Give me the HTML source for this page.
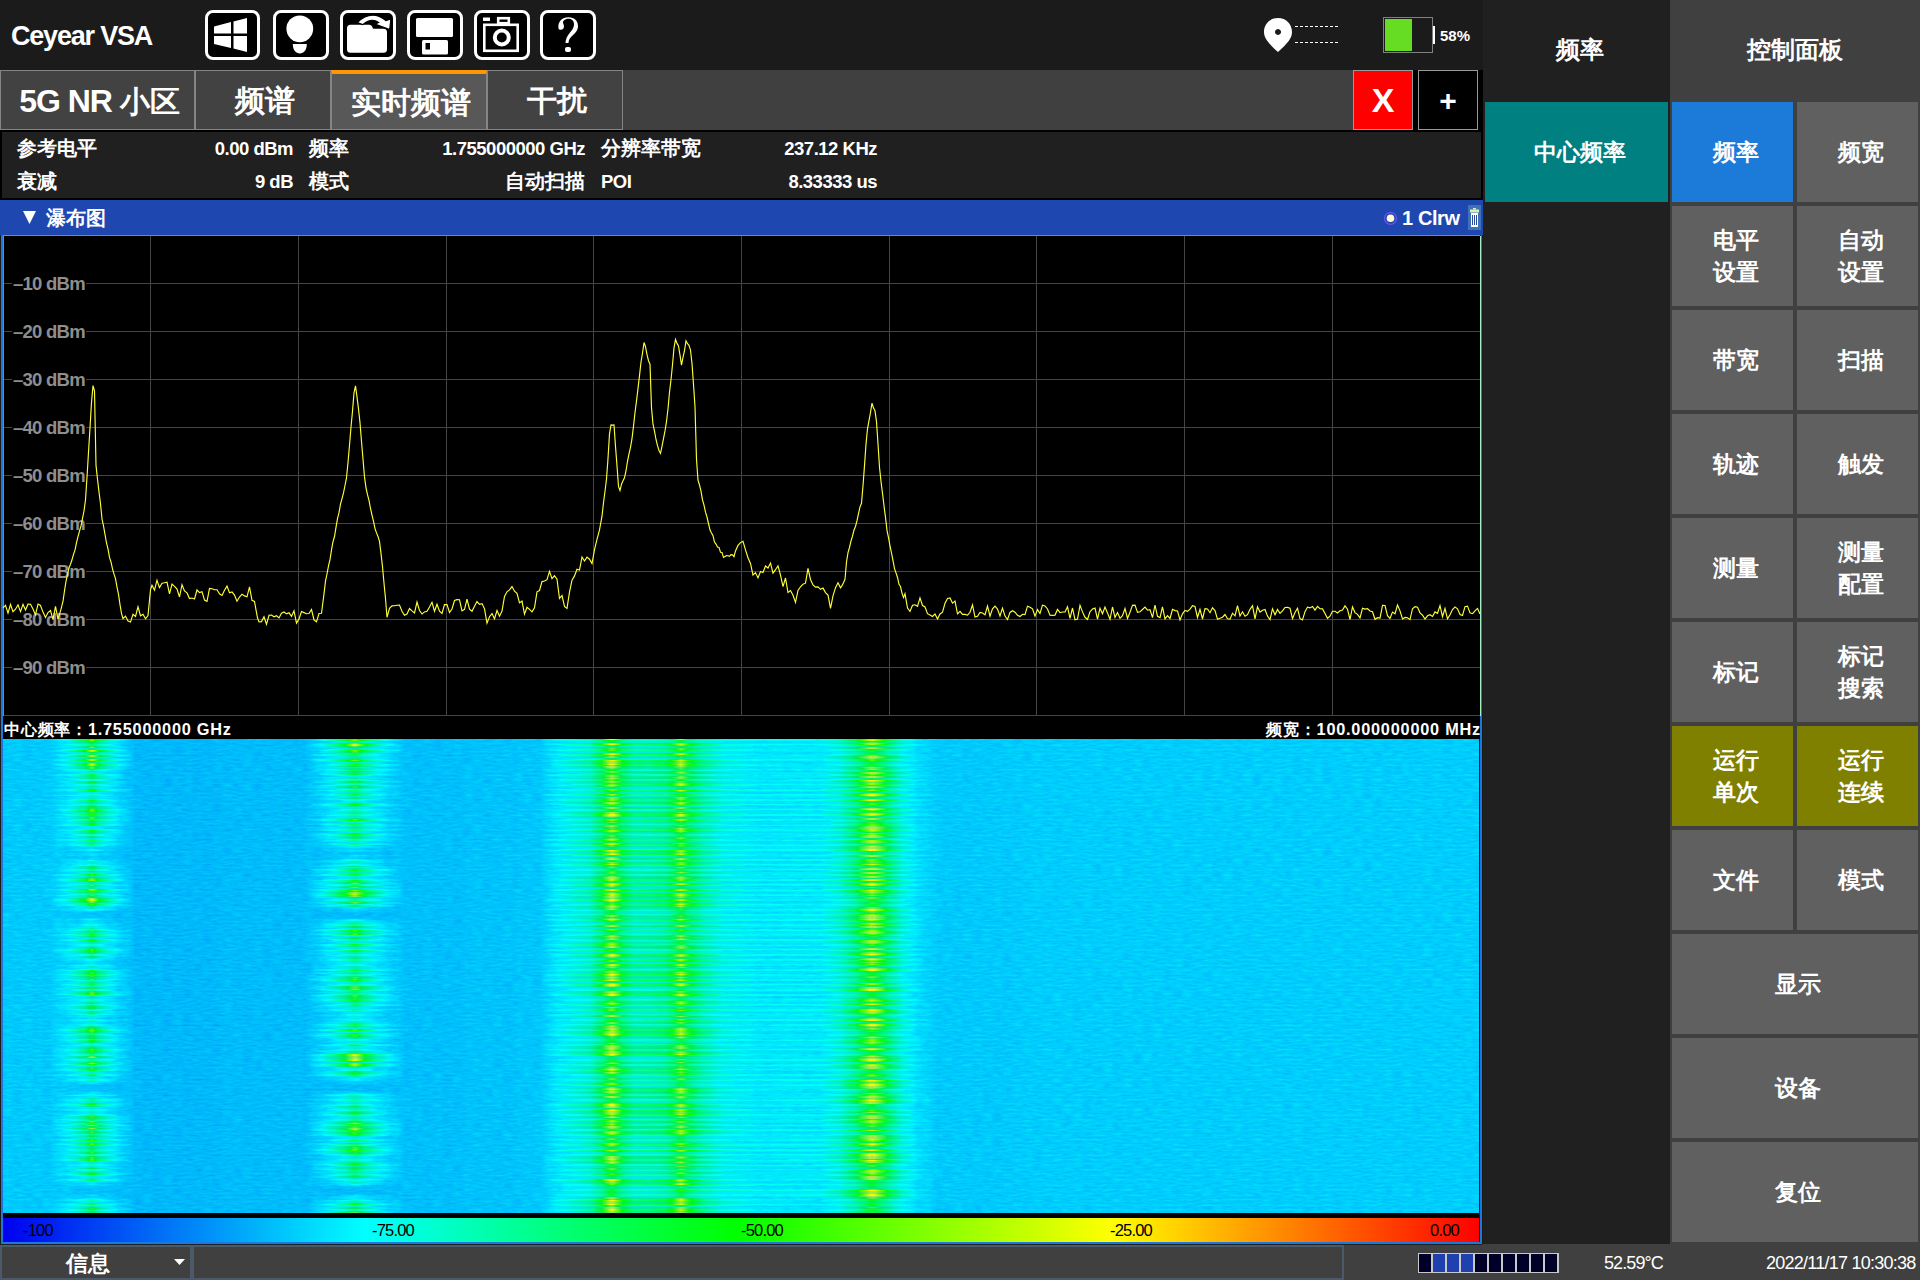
<!DOCTYPE html>
<html><head><meta charset="utf-8">
<style>
*{margin:0;padding:0;box-sizing:border-box}
html,body{width:1920px;height:1280px;overflow:hidden;background:#1b1b1b;font-family:"Liberation Sans",sans-serif;color:#fff;font-weight:bold}
.a{position:absolute}
.t{position:absolute;white-space:nowrap;line-height:1}
/* top bar */
#title{left:11px;top:23px;font-size:27px;letter-spacing:-1.2px}
.ic{position:absolute;top:10px;width:55px;height:50px;border:3px solid #fff;border-radius:8px;background:#000}
.ic svg{position:absolute;left:0;top:0}
/* tabs */
#tabbar{left:0;top:70px;width:1353px;height:60px;background:#404040}
.tab{position:absolute;top:70px;height:60px;background:#424242;border:1px solid #858585;font-size:30px;text-align:center;line-height:60px;padding-left:4px}
.lat{font-size:32px;letter-spacing:-1px}
.tab.act{background:#585858;border-top:4px solid #ff9800;line-height:58px}
#xbtn{left:1353px;top:70px;width:60px;height:60px;background:#f00;border:1px solid #999;font-size:34px;text-align:center;line-height:58px;font-weight:bold}
#pbtn{left:1418px;top:70px;width:60px;height:60px;background:#000;border:1px solid #999;font-size:30px;text-align:center;line-height:59px}
/* info */
#info{left:0;top:130px;width:1483px;height:70px;background:#202020;border:2px solid #000}
.inf{font-size:20px}
.vl{font-size:18.5px;letter-spacing:-0.5px;margin-top:-1.5px}
/* blue bar */
#bbar{left:0;top:200px;width:1483px;height:35px;background:#1f47b0}
/* plot */
#plot{left:3px;top:235px;width:1477px;height:481px;background:#000}
.yl{position:absolute;left:12px;font-size:18.5px;color:#8e8e8e;line-height:20px;white-space:nowrap;background:#000;padding:0 1px;margin-top:3px;letter-spacing:-0.75px}
#lrow{left:3px;top:716px;width:1477px;height:23px;background:#000}
#wf{left:3px;top:739px;width:1476px;height:474px;background:#00c0f8}
#cbar{left:3px;top:1218px;width:1476px;height:24px;background:linear-gradient(90deg,#0000f0 0%,#00ffff 24.5%,#00ff00 49.7%,#ffff00 75.1%,#ff0000 100%)}
.cl{position:absolute;top:1221px;font-weight:normal;color:#000;font-size:16.5px;line-height:18px;letter-spacing:-0.8px;white-space:nowrap}
/* status bar */
#sbar{left:0;top:1244px;width:1920px;height:36px;background:#404040}
/* right */
#rcol{left:1483px;top:0;width:187px;height:1244px;background:#202020}
#cpan{left:1670px;top:0;width:250px;height:1244px;background:#404040}
.btn{position:absolute;background:#606060;font-size:23px;padding-left:6px;text-align:center;display:flex;align-items:center;justify-content:center;line-height:32px}
</style></head>
<body>
<!-- top bar -->
<div class="t" id="title">Ceyear VSA</div>
<div class="ic" style="left:205px;width:55px">
 <svg width="49" height="44" viewBox="0 0 49 44"><path d="M6,13.5 L23,9 V20.5 H6 Z M25.5,8.5 L39,5 V20.5 H25.5 Z M6,23 H23 V35 L6,31 Z M25.5,23 H39 V39 L25.5,35.5 Z" fill="#fff"/></svg>
</div>
<div class="ic" style="left:273px;width:56px">
 <svg width="50" height="44" viewBox="0 0 50 44"><circle cx="23.8" cy="15.8" r="13.4" fill="#fff"/><path d="M14.5,22 H33 L30,28 H17.5 Z" fill="#fff"/><path d="M16.8,31 H30.8 C30.8,37 27.8,40.5 23.8,40.5 C19.8,40.5 16.8,37 16.8,31 Z" fill="#fff"/></svg>
</div>
<div class="ic" style="left:340px;width:56px">
 <svg width="50" height="44" viewBox="0 0 50 44"><path d="M7.5,11.8 H26 Q29,11.8 30,15.7 H40.5 Q44,15.7 44,19.2 V36.2 Q44,39.7 40.5,39.7 H7.5 Q4,39.7 4,36.2 V15.3 Q4,11.8 7.5,11.8 Z" fill="#fff"/><path d="M14.3,9.5 Q28.4,-4 42.9,7.5 L47.9,5.9 L46.7,16.6 L32,11.1 L35.6,9.5 Q28.4,4.5 19.7,11.6 Z" fill="#fff" stroke="#000" stroke-width="1.2"/></svg>
</div>
<div class="ic" style="left:407px;width:56px">
 <svg width="50" height="44" viewBox="0 0 50 44"><rect x="6" y="5" width="37" height="19" rx="1.5" fill="#fff"/><rect x="12" y="27" width="26" height="14.5" rx="1.5" fill="#fff"/><rect x="15.5" y="30" width="4.5" height="6.5" fill="#000"/></svg>
</div>
<div class="ic" style="left:474px;width:56px">
 <svg width="50" height="44" viewBox="0 0 50 44"><rect x="6" y="4.5" width="7" height="3.5" fill="#fff"/><rect x="21.2" y="5.2" width="10.6" height="5" fill="none" stroke="#fff" stroke-width="2.6"/><rect x="7.3" y="11.8" width="33.4" height="26" fill="none" stroke="#fff" stroke-width="2.6"/><circle cx="24.8" cy="24.5" r="7" fill="none" stroke="#fff" stroke-width="4"/></svg>
</div>
<div class="ic" style="left:540px;width:56px">
 <svg width="50" height="44" viewBox="0 0 50 44"><path d="M15.5,15.5 C14.5,8.5 19,4.2 25.5,4.2 C31.5,4.2 35,8 35,13 C35,18 31.5,20.5 28.5,23.5 C26.5,25.5 25.5,27.5 25.5,30 L22.5,30 C22.5,26.5 24,23 27,19.5 C29.5,16.5 31,14.5 31,11.5 C31,7.5 28.5,5.8 25.5,5.8 C22.5,5.8 20,7.5 20,9.5 C20,10.5 21,11.5 21,13.5 C21,15.5 19.5,16.8 18,16.8 C16.5,16.8 15.6,16.2 15.5,15.5 Z" fill="#fff"/><rect x="22" y="34" width="6" height="5" rx="2" fill="#fff"/></svg>
</div>
<!-- location + battery -->
<svg class="a" style="left:1260px;top:14px" width="90" height="44" viewBox="0 0 90 44">
 <path d="M18,4 C26,4 32,10 32,18 C32,24 28,29 18,38 C8,29 4,24 4,18 C4,10 10,4 18,4 Z M18,15 A3,3 0 1 0 18.01,15 Z" fill="#fff" fill-rule="evenodd"/>
 <line x1="35" y1="12.5" x2="80" y2="12.5" stroke="#fff" stroke-width="1" stroke-dasharray="3,2"/>
 <line x1="35" y1="28.5" x2="80" y2="28.5" stroke="#fff" stroke-width="1" stroke-dasharray="3,2"/>
</svg>
<div class="a" style="left:1383px;top:17px;width:50px;height:36px;border:1px solid #808080"></div>
<div class="a" style="left:1385px;top:19px;width:27px;height:32px;background:#66dd22"></div>
<div class="a" style="left:1433px;top:26px;width:2px;height:18px;background:#fff"></div>
<div class="t" style="left:1440px;top:28px;font-size:15px">58%</div>

<!-- tabs -->
<div class="a" id="tabbar"></div>
<div class="a" style="left:1413px;top:70px;width:70px;height:60px;background:#000"></div>
<div class="tab" style="left:0;width:195px"><span class="lat">5G NR </span>小区</div>
<div class="tab" style="left:195px;width:136px">频谱</div>
<div class="tab act" style="left:331px;width:156px">实时频谱</div>
<div class="tab" style="left:487px;width:136px">干扰</div>
<div class="a" id="xbtn">X</div>
<div class="a" id="pbtn">+</div>

<!-- info -->
<div class="a" id="info"></div>
<div class="t inf" style="left:17px;top:138px">参考电平</div>
<div class="t inf" style="left:17px;top:171px">衰减</div>
<div class="t vl" style="right:1627px;top:141px">0.00 dBm</div>
<div class="t vl" style="right:1627px;top:174px">9 dB</div>
<div class="t inf" style="left:309px;top:138px">频率</div>
<div class="t inf" style="left:309px;top:171px">模式</div>
<div class="t vl" style="right:1335px;top:141px">1.755000000 GHz</div>
<div class="t inf" style="right:1335px;top:171px">自动扫描</div>
<div class="t inf" style="left:601px;top:138px">分辨率带宽</div>
<div class="t vl" style="left:601px;top:174px">POI</div>
<div class="t vl" style="right:1043px;top:141px">237.12 KHz</div>
<div class="t vl" style="right:1043px;top:174px">8.33333 us</div>

<!-- blue bar -->
<div class="a" id="bbar"></div>
<svg class="a" style="left:23px;top:211px" width="14" height="14"><path d="M0,0 H13 L6.5,13 Z" fill="#fff"/></svg>
<div class="t" style="left:46px;top:208px;font-size:20px">瀑布图</div>
<svg class="a" style="left:1383px;top:211px" width="15" height="15"><circle cx="7.5" cy="7.3" r="6" fill="none" stroke="#7050f0" stroke-width="1.2"/><circle cx="7.5" cy="7.3" r="3.8" fill="#fffad0"/></svg>
<div class="t" style="left:1402px;top:208px;font-size:20px;letter-spacing:-0.4px">1 Clrw</div>
<div class="a" style="left:1468px;top:205px;width:13px;height:25px;background:#4070b8"></div>
<svg class="a" style="left:1468px;top:205px" width="13" height="25"><rect x="5" y="3" width="3" height="1.5" fill="#d8f0b8"/><rect x="2" y="4.5" width="9" height="3" fill="#d8f0b8"/><rect x="3" y="8" width="7" height="14" fill="#fff"/><rect x="4" y="10" width="1" height="10" fill="#2a4a9a"/><rect x="6" y="10" width="1" height="10" fill="#2a4a9a"/><rect x="8" y="10" width="1" height="10" fill="#2a4a9a"/></svg>

<!-- left blue border of main panel -->
<div class="a" style="left:1px;top:235px;width:2px;height:1009px;background:#1e78dc"></div>
<div class="a" style="left:1480px;top:716px;width:2px;height:528px;background:#1e78dc"></div>
<div class="a" style="left:1481px;top:235px;width:1px;height:481px;background:#1e78dc"></div>
<div class="a" style="left:1480px;top:236px;width:1px;height:480px;background:#a0f0c8"></div>
<div class="a" style="left:1px;top:1242px;width:1481px;height:2px;background:#1e78dc"></div>

<!-- plot -->
<div class="a" id="plot"></div>
<svg class="a" style="left:0;top:0" width="1483" height="740" viewBox="0 0 1483 740">
<g stroke="#444" stroke-width="1">
<line x1="150.5" y1="236" x2="150.5" y2="716" />
<line x1="298.5" y1="236" x2="298.5" y2="716" />
<line x1="446.5" y1="236" x2="446.5" y2="716" />
<line x1="593.5" y1="236" x2="593.5" y2="716" />
<line x1="741.5" y1="236" x2="741.5" y2="716" />
<line x1="889.5" y1="236" x2="889.5" y2="716" />
<line x1="1036.5" y1="236" x2="1036.5" y2="716" />
<line x1="1184.5" y1="236" x2="1184.5" y2="716" />
<line x1="1332.5" y1="236" x2="1332.5" y2="716" />
<line x1="4" y1="283.5" x2="1480" y2="283.5" />
<line x1="4" y1="331.5" x2="1480" y2="331.5" />
<line x1="4" y1="379.5" x2="1480" y2="379.5" />
<line x1="4" y1="427.5" x2="1480" y2="427.5" />
<line x1="4" y1="475.5" x2="1480" y2="475.5" />
<line x1="4" y1="523.5" x2="1480" y2="523.5" />
<line x1="4" y1="571.5" x2="1480" y2="571.5" />
<line x1="4" y1="619.5" x2="1480" y2="619.5" />
<line x1="4" y1="667.5" x2="1480" y2="667.5" />
<line x1="4" y1="715.5" x2="1480" y2="715.5" />
<line x1="3" y1="235.5" x2="1480" y2="235.5" stroke="#858585"/>
<line x1="3.5" y1="235" x2="3.5" y2="716" stroke="#858585"/>
</g>
</svg>
<div class="yl" style="top:271px">&#8211;10 dBm</div><div class="yl" style="top:319px">&#8211;20 dBm</div><div class="yl" style="top:367px">&#8211;30 dBm</div><div class="yl" style="top:415px">&#8211;40 dBm</div><div class="yl" style="top:463px">&#8211;50 dBm</div><div class="yl" style="top:511px">&#8211;60 dBm</div><div class="yl" style="top:559px">&#8211;70 dBm</div><div class="yl" style="top:607px">&#8211;80 dBm</div><div class="yl" style="top:655px">&#8211;90 dBm</div>
<svg class="a" style="left:0;top:0" width="1483" height="740" viewBox="0 0 1483 740">
<path d="M3.0,607.9 L5.5,605.4 L8.0,613.1 L10.5,604.5 L13.0,611.6 L15.5,609.2 L18.0,604.8 L20.5,611.6 L23.0,604.3 L25.5,610.0 L28.0,604.2 L30.5,604.3 L33.0,609.1 L35.5,614.9 L38.0,604.1 L40.5,605.5 L43.0,612.1 L45.5,617.5 L48.0,612.6 L50.5,610.5 L53.0,619.7 L55.5,606.4 L58.0,619.2 L60.5,611.2 L63.0,601.3 L64.5,590.9 L66.0,581.3 L67.5,574.4 L69.0,567.8 L70.5,564.3 L72.0,559.8 L73.5,554.3 L75.0,550.1 L76.5,542.7 L78.0,536.7 L79.5,531.1 L81.0,525.9 L82.5,518.3 L84.0,511.0 L85.5,499.9 L87.0,477.3 L88.5,452.2 L90.0,427.9 L91.5,402.4 L93.0,385.6 L94.5,390.8 L96.0,465.1 L97.5,479.3 L99.0,491.9 L100.5,503.8 L102.0,519.0 L103.5,525.9 L105.0,534.4 L106.5,543.0 L108.0,548.8 L109.5,557.4 L111.0,562.0 L112.5,568.8 L114.0,574.1 L115.5,578.6 L117.0,587.1 L118.5,594.4 L120.0,604.6 L121.5,613.3 L123.0,618.6 L125.5,616.1 L128.0,621.1 L130.5,622.1 L133.0,614.3 L135.5,616.5 L138.0,606.8 L140.5,615.8 L143.0,614.3 L145.5,618.8 L148.0,615.6 L150.5,589.9 L152.0,585.3 L154.5,590.2 L157.0,580.2 L159.5,587.6 L162.0,583.3 L164.5,582.8 L167.0,582.2 L169.5,593.9 L172.0,584.1 L174.5,586.3 L177.0,589.0 L179.5,597.0 L182.0,584.7 L184.5,591.0 L187.0,592.9 L189.5,598.6 L192.0,598.0 L194.5,599.0 L197.0,590.0 L199.5,592.6 L202.0,591.7 L204.5,600.1 L207.0,601.3 L209.5,588.4 L212.0,588.8 L214.5,589.7 L217.0,589.7 L219.5,593.8 L222.0,595.4 L224.5,590.2 L227.0,586.1 L229.5,592.7 L232.0,591.9 L234.5,595.1 L237.0,601.2 L239.5,597.0 L242.0,594.2 L244.5,595.9 L247.0,596.8 L249.5,586.9 L252.0,600.4 L254.5,601.5 L256.0,609.9 L257.5,617.8 L259.0,621.9 L261.5,621.6 L264.0,616.8 L266.5,624.3 L269.0,615.3 L271.5,615.0 L274.0,616.8 L276.5,615.7 L279.0,617.9 L281.5,613.2 L284.0,612.0 L286.5,613.9 L289.0,612.8 L291.5,616.3 L294.0,610.8 L296.5,623.2 L299.0,618.9 L301.5,611.5 L304.0,612.6 L306.5,613.7 L309.0,613.5 L311.5,609.5 L314.0,620.0 L316.5,621.8 L319.0,613.5 L321.5,613.3 L324.0,593.8 L325.5,581.2 L327.0,574.0 L328.5,565.9 L330.0,559.7 L331.5,549.9 L333.0,541.6 L334.5,536.5 L336.0,527.3 L337.5,518.6 L339.0,512.7 L340.5,504.1 L342.0,498.6 L343.5,492.9 L345.0,485.5 L346.5,477.9 L348.0,462.5 L349.5,445.2 L351.0,427.0 L352.5,411.2 L354.0,392.8 L355.5,385.9 L357.0,396.9 L358.5,408.9 L360.0,422.9 L361.5,441.5 L363.0,459.1 L364.5,476.9 L366.0,487.8 L367.5,494.7 L369.0,500.4 L370.5,508.5 L372.0,515.2 L373.5,521.4 L375.0,528.6 L376.5,532.9 L378.0,536.5 L379.5,541.4 L381.0,553.4 L382.5,566.8 L384.0,583.3 L385.5,598.5 L387.0,617.3 L389.5,608.3 L392.0,605.9 L394.5,605.8 L397.0,605.2 L399.5,605.1 L402.0,611.2 L404.5,615.2 L407.0,614.1 L409.5,608.5 L412.0,610.9 L414.5,612.9 L417.0,602.0 L419.5,610.5 L422.0,614.0 L424.5,611.9 L427.0,611.2 L429.5,607.0 L432.0,602.3 L434.5,611.3 L437.0,604.2 L439.5,611.1 L442.0,613.4 L444.5,604.6 L447.0,604.5 L449.5,612.5 L452.0,609.0 L454.5,600.5 L457.0,599.6 L459.5,599.8 L462.0,610.9 L464.5,609.3 L467.0,599.2 L469.5,609.2 L472.0,611.3 L474.5,606.3 L477.0,601.5 L479.5,604.3 L482.0,603.6 L484.5,608.8 L487.0,623.2 L489.5,616.7 L492.0,613.6 L494.5,618.8 L497.0,610.5 L499.5,616.2 L502.0,611.1 L504.5,596.5 L507.0,591.8 L509.5,589.9 L512.0,586.6 L514.5,591.2 L517.0,593.4 L519.5,602.9 L522.0,601.1 L524.5,614.2 L527.0,607.3 L529.5,609.4 L532.0,611.8 L534.5,607.8 L537.0,591.8 L539.5,590.5 L542.0,581.6 L544.5,581.0 L547.0,579.7 L549.5,571.4 L552.0,578.6 L554.5,575.6 L557.0,579.1 L559.5,598.5 L562.0,595.6 L564.5,606.4 L567.0,608.4 L569.5,592.1 L572.0,580.2 L574.5,575.9 L577.0,569.3 L579.5,570.0 L582.0,557.0 L584.5,561.0 L587.0,557.1 L589.5,559.2 L592.0,563.6 L594.5,549.6 L597.0,539.4 L599.5,529.9 L602.0,516.2 L603.5,502.8 L605.0,491.3 L606.5,479.0 L608.0,458.4 L609.5,433.9 L611.0,424.9 L612.5,425.1 L614.0,424.9 L615.5,446.4 L617.0,465.8 L618.5,486.4 L620.0,490.5 L621.5,484.2 L623.0,480.8 L624.5,477.7 L626.0,471.0 L627.5,461.4 L629.0,453.9 L630.5,447.3 L632.0,438.7 L633.5,426.1 L635.0,412.5 L636.5,401.1 L638.0,388.4 L639.5,375.6 L641.0,362.0 L642.5,353.1 L644.0,342.5 L645.5,346.7 L647.0,354.6 L648.5,360.7 L650.0,364.2 L651.5,407.6 L653.0,424.2 L654.5,431.2 L656.0,439.5 L657.5,445.7 L659.0,450.5 L660.5,453.4 L662.0,446.4 L663.5,438.6 L665.0,430.9 L666.5,421.7 L668.0,408.7 L669.5,392.3 L671.0,379.7 L672.5,364.7 L674.0,347.9 L675.5,339.5 L677.0,343.4 L678.5,346.0 L680.0,355.2 L681.5,365.1 L683.0,357.3 L684.5,350.6 L686.0,340.8 L687.5,343.7 L689.0,345.4 L690.5,350.0 L692.0,363.6 L693.5,384.5 L695.0,406.8 L696.5,459.2 L698.0,480.2 L699.5,485.0 L701.0,491.1 L702.5,499.8 L704.0,505.2 L705.5,512.2 L707.0,517.0 L708.5,523.5 L710.0,530.1 L711.5,533.0 L713.0,535.7 L714.5,542.1 L716.0,544.1 L717.5,547.1 L719.0,547.4 L720.5,552.2 L722.0,552.4 L723.5,557.3 L725.0,556.5 L726.5,555.7 L728.0,555.8 L729.5,556.4 L731.0,554.7 L732.5,554.9 L734.0,556.7 L735.5,550.9 L738.0,545.4 L740.5,542.6 L743.0,541.3 L745.5,549.8 L748.0,557.7 L750.5,563.5 L753.0,575.0 L755.5,572.6 L758.0,577.9 L760.5,571.5 L763.0,572.5 L765.5,566.0 L768.0,568.0 L770.5,563.1 L773.0,573.1 L775.5,569.7 L778.0,565.8 L780.5,575.1 L783.0,586.6 L785.5,578.0 L788.0,592.5 L790.5,590.6 L793.0,595.3 L795.5,602.4 L798.0,590.5 L800.5,586.8 L803.0,584.2 L805.5,583.2 L808.0,568.3 L810.5,579.5 L813.0,584.9 L815.5,587.1 L818.0,586.9 L820.5,589.3 L823.0,588.1 L825.5,592.6 L828.0,595.1 L830.5,608.4 L833.0,595.8 L835.5,587.7 L838.0,582.8 L840.5,587.8 L842.0,585.6 L843.5,582.8 L845.0,579.3 L846.5,562.0 L848.0,552.6 L849.5,547.5 L851.0,541.0 L852.5,536.2 L854.0,530.0 L855.5,526.5 L857.0,520.7 L858.5,513.6 L860.0,506.9 L861.5,503.3 L863.0,485.8 L864.5,465.6 L866.0,444.1 L867.5,428.8 L869.0,420.7 L870.5,412.4 L872.0,403.1 L873.5,408.1 L875.0,410.8 L876.5,421.8 L878.0,443.8 L879.5,467.2 L881.0,481.5 L882.5,493.2 L884.0,505.8 L885.5,517.4 L887.0,530.3 L888.5,537.6 L890.0,545.8 L891.5,553.0 L893.0,560.6 L894.5,568.6 L896.0,572.9 L897.5,577.5 L899.0,584.3 L900.5,586.5 L902.0,593.1 L903.5,597.6 L905.0,593.7 L907.5,608.0 L910.0,611.4 L912.5,605.3 L915.0,604.8 L917.5,606.3 L920.0,597.9 L922.5,605.5 L925.0,607.0 L927.5,613.7 L930.0,615.1 L932.5,616.5 L935.0,613.9 L937.5,619.0 L940.0,613.9 L942.5,612.2 L945.0,603.3 L947.5,598.4 L950.0,598.0 L952.5,603.2 L955.0,601.1 L957.5,613.8 L960.0,611.4 L962.5,614.4 L965.0,614.4 L967.5,615.2 L970.0,612.3 L972.5,605.0 L975.0,617.0 L977.5,616.2 L980.0,612.5 L982.5,613.0 L985.0,614.9 L987.5,606.0 L990.0,616.1 L992.5,608.8 L995.0,606.1 L997.5,609.0 L1000.0,615.9 L1002.5,608.1 L1005.0,616.1 L1007.5,619.6 L1010.0,612.4 L1012.5,610.7 L1015.0,612.2 L1017.5,615.3 L1020.0,616.5 L1022.5,614.3 L1025.0,614.6 L1027.5,606.2 L1030.0,607.2 L1032.5,608.8 L1035.0,616.1 L1037.5,609.6 L1040.0,613.5 L1042.5,605.2 L1045.0,605.9 L1047.5,609.0 L1050.0,615.1 L1052.5,615.4 L1055.0,615.1 L1057.5,609.4 L1060.0,612.7 L1062.5,612.0 L1065.0,612.0 L1067.5,606.8 L1070.0,618.4 L1072.5,608.0 L1075.0,619.7 L1077.5,619.0 L1080.0,605.3 L1082.5,611.9 L1085.0,617.3 L1087.5,619.5 L1090.0,611.7 L1092.5,609.0 L1095.0,608.1 L1097.5,619.2 L1100.0,608.2 L1102.5,613.7 L1105.0,607.1 L1107.5,612.9 L1110.0,619.3 L1112.5,607.0 L1115.0,617.3 L1117.5,612.6 L1120.0,618.3 L1122.5,615.6 L1125.0,608.5 L1127.5,618.5 L1130.0,612.3 L1132.5,605.4 L1135.0,605.1 L1137.5,612.4 L1140.0,611.8 L1142.5,609.5 L1145.0,607.1 L1147.5,610.2 L1150.0,609.7 L1152.5,617.6 L1155.0,605.0 L1157.5,616.3 L1160.0,617.6 L1162.5,606.8 L1165.0,618.9 L1167.5,615.7 L1170.0,618.5 L1172.5,609.3 L1175.0,610.6 L1177.5,610.9 L1180.0,620.0 L1182.5,613.8 L1185.0,610.4 L1187.5,611.4 L1190.0,609.1 L1192.5,605.7 L1195.0,606.5 L1197.5,617.5 L1200.0,609.3 L1202.5,619.0 L1205.0,608.7 L1207.5,609.0 L1210.0,612.7 L1212.5,607.8 L1215.0,610.6 L1217.5,619.3 L1220.0,618.3 L1222.5,617.2 L1225.0,614.5 L1227.5,618.7 L1230.0,619.1 L1232.5,613.2 L1235.0,615.8 L1237.5,605.7 L1240.0,616.0 L1242.5,611.8 L1245.0,616.3 L1247.5,614.7 L1250.0,609.3 L1252.5,605.7 L1255.0,618.9 L1257.5,606.9 L1260.0,612.1 L1262.5,610.2 L1265.0,609.5 L1267.5,616.1 L1270.0,619.6 L1272.5,608.9 L1275.0,614.8 L1277.5,609.5 L1280.0,613.4 L1282.5,610.9 L1285.0,607.5 L1287.5,607.4 L1290.0,608.1 L1292.5,618.6 L1295.0,612.5 L1297.5,608.3 L1300.0,618.6 L1302.5,619.9 L1305.0,611.7 L1307.5,607.1 L1310.0,607.9 L1312.5,606.4 L1315.0,610.1 L1317.5,606.4 L1320.0,608.6 L1322.5,608.9 L1325.0,613.5 L1327.5,618.3 L1330.0,616.2 L1332.5,611.2 L1335.0,611.2 L1337.5,612.9 L1340.0,610.7 L1342.5,610.1 L1345.0,605.9 L1347.5,609.2 L1350.0,619.5 L1352.5,606.9 L1355.0,612.6 L1357.5,614.4 L1360.0,617.9 L1362.5,608.2 L1365.0,609.1 L1367.5,608.7 L1370.0,611.0 L1372.5,611.7 L1375.0,619.3 L1377.5,617.7 L1380.0,618.1 L1382.5,605.3 L1385.0,605.5 L1387.5,615.6 L1390.0,618.4 L1392.5,612.1 L1395.0,613.8 L1397.5,605.0 L1400.0,610.9 L1402.5,618.9 L1405.0,617.4 L1407.5,617.8 L1410.0,619.6 L1412.5,608.7 L1415.0,606.6 L1417.5,607.3 L1420.0,612.8 L1422.5,615.2 L1425.0,619.1 L1427.5,615.8 L1430.0,614.7 L1432.5,616.5 L1435.0,611.9 L1437.5,613.3 L1440.0,605.6 L1442.5,616.7 L1445.0,608.5 L1447.5,618.8 L1450.0,614.7 L1452.5,609.6 L1455.0,606.9 L1457.5,608.8 L1460.0,614.5 L1462.5,615.5 L1465.0,606.7 L1467.5,606.1 L1470.0,612.9 L1472.5,613.7 L1475.0,610.8 L1477.5,608.4 L1480.0,614.0" fill="none" stroke="#ffff38" stroke-width="1.15" stroke-linejoin="miter"/>
</svg>
<div class="a" id="lrow"></div>
<div class="t" style="left:4px;top:720.5px;font-size:16.3px;letter-spacing:0.78px">中心频率：1.755000000 GHz</div>
<div class="t" style="right:439px;top:720.5px;font-size:16.3px;letter-spacing:0.78px">频宽：100.000000000 MHz</div>

<!-- waterfall -->
<svg class="a" style="left:3px;top:739px" width="1476" height="474" viewBox="0 0 1476 474">
<defs>
<linearGradient id="prof" x1="0" y1="0" x2="1476" y2="0" gradientUnits="userSpaceOnUse"><stop offset="0.0000" stop-color="rgb(0,128,0)"/><stop offset="0.0318" stop-color="rgb(0,128,0)"/><stop offset="0.0386" stop-color="rgb(22,128,0)"/><stop offset="0.0413" stop-color="rgb(31,124,0)"/><stop offset="0.0495" stop-color="rgb(82,112,0)"/><stop offset="0.0562" stop-color="rgb(153,103,0)"/><stop offset="0.0603" stop-color="rgb(255,97,0)"/><stop offset="0.0644" stop-color="rgb(153,91,0)"/><stop offset="0.0711" stop-color="rgb(82,82,0)"/><stop offset="0.0793" stop-color="rgb(31,70,0)"/><stop offset="0.0894" stop-color="rgb(0,56,0)"/><stop offset="0.0928" stop-color="rgb(0,51,0)"/><stop offset="0.2012" stop-color="rgb(0,64,0)"/><stop offset="0.2046" stop-color="rgb(0,64,0)"/><stop offset="0.2148" stop-color="rgb(31,66,0)"/><stop offset="0.2243" stop-color="rgb(82,67,0)"/><stop offset="0.2324" stop-color="rgb(153,69,0)"/><stop offset="0.2385" stop-color="rgb(255,70,0)"/><stop offset="0.2446" stop-color="rgb(153,71,0)"/><stop offset="0.2527" stop-color="rgb(82,72,0)"/><stop offset="0.2622" stop-color="rgb(31,73,0)"/><stop offset="0.2724" stop-color="rgb(0,75,0)"/><stop offset="0.2825" stop-color="rgb(0,76,0)"/><stop offset="0.3638" stop-color="rgb(0,115,0)"/><stop offset="0.3808" stop-color="rgb(0,116,38)"/><stop offset="0.3977" stop-color="rgb(0,117,71)"/><stop offset="0.4058" stop-color="rgb(0,117,140)"/><stop offset="0.4126" stop-color="rgb(0,117,255)"/><stop offset="0.4194" stop-color="rgb(0,118,140)"/><stop offset="0.4275" stop-color="rgb(0,118,87)"/><stop offset="0.4383" stop-color="rgb(0,119,92)"/><stop offset="0.4485" stop-color="rgb(0,119,107)"/><stop offset="0.4546" stop-color="rgb(0,119,153)"/><stop offset="0.4593" stop-color="rgb(0,120,230)"/><stop offset="0.4641" stop-color="rgb(0,120,153)"/><stop offset="0.4736" stop-color="rgb(0,120,89)"/><stop offset="0.4871" stop-color="rgb(0,121,46)"/><stop offset="0.5129" stop-color="rgb(0,123,26)"/><stop offset="0.5535" stop-color="rgb(0,125,26)"/><stop offset="0.5671" stop-color="rgb(0,125,56)"/><stop offset="0.5772" stop-color="rgb(0,126,115)"/><stop offset="0.5840" stop-color="rgb(0,126,191)"/><stop offset="0.5888" stop-color="rgb(0,127,255)"/><stop offset="0.5942" stop-color="rgb(0,127,191)"/><stop offset="0.6009" stop-color="rgb(0,127,115)"/><stop offset="0.6077" stop-color="rgb(0,128,62)"/><stop offset="0.6091" stop-color="rgb(0,128,51)"/><stop offset="0.6199" stop-color="rgb(0,130,15)"/><stop offset="0.6335" stop-color="rgb(0,132,0)"/><stop offset="0.6755" stop-color="rgb(0,140,0)"/><stop offset="1.0007" stop-color="rgb(0,153,0)"/></linearGradient>
<filter id="wff" x="0" y="0" width="1476" height="474" filterUnits="userSpaceOnUse" color-interpolation-filters="sRGB">
 <feColorMatrix in="SourceGraphic" type="matrix" values="1.0 0 0 0 0.0 1.0 0 0 0 0.0 1.0 0 0 0 0.0 0 0 0 0 1" result="r1"/>
 <feColorMatrix in="SourceGraphic" type="matrix" values="0 0 1.0 0 0.0 0 0 1.0 0 0.0 0 0 1.0 0 0.0 0 0 0 0 1" result="b1"/>
 <feColorMatrix in="SourceGraphic" type="matrix" values="0 0.06 0 0 0.165 0 0.06 0 0 0.165 0 0.06 0 0 0.165 0 0 0 0 1" result="bg"/>
 <feTurbulence type="fractalNoise" baseFrequency="0 0.03" numOctaves="2" seed="21" result="tv"/>
 <feColorMatrix in="tv" type="matrix" values="3.0 0 0 0 -0.9 3.0 0 0 0 -0.9 3.0 0 0 0 -0.9 0 0 0 0 1" result="tvs"/>
 <feComposite in="r1" in2="tvs" operator="arithmetic" k1="1" k2="0" k3="0" k4="0" result="r2"/>
 <feTurbulence type="fractalNoise" baseFrequency="0.004 0.45" numOctaves="1" seed="5" result="n1"/>
 <feColorMatrix in="n1" type="matrix" values="5 0 0 0 -2.0 5 0 0 0 -2.0 5 0 0 0 -2.0 0 0 0 0 1" result="n1s"/>
 <feComposite in="r2" in2="n1s" operator="arithmetic" k1="1" k2="0" k3="0" k4="0" result="r3"/>
 <feColorMatrix in="r3" type="matrix" values="0.36 0 0 0 0.0 0.36 0 0 0 0.0 0.36 0 0 0 0.0 0 0 0 0 1" result="r3s"/>
 <feColorMatrix in="r2" type="matrix" values="0.2 0 0 0 0.0 0.2 0 0 0 0.0 0.2 0 0 0 0.0 0 0 0 0 1" result="r2s"/>
 <feComposite in="b1" in2="n1s" operator="arithmetic" k1="1" k2="0" k3="0" k4="0" result="b3"/>
 <feColorMatrix in="b3" type="matrix" values="0.3 0 0 0 0.0 0.3 0 0 0 0.0 0.3 0 0 0 0.0 0 0 0 0 1" result="b3s"/>
 <feColorMatrix in="b1" type="matrix" values="0.28 0 0 0 0.0 0.28 0 0 0 0.0 0.28 0 0 0 0.0 0 0 0 0 1" result="b2s"/>
 <feComposite in="r3s" in2="r2s" operator="arithmetic" k2="1" k3="1" result="s1"/>
 <feComposite in="b3s" in2="b2s" operator="arithmetic" k2="1" k3="1" result="s2"/>
 <feComposite in="s1" in2="s2" operator="arithmetic" k2="1" k3="1" result="s3"/>
 <feComposite in="s3" in2="bg" operator="arithmetic" k2="1" k3="1" result="s4"/>
 <feTurbulence type="fractalNoise" baseFrequency="0.10 0.5" numOctaves="2" seed="11" result="n2"/>
 <feColorMatrix in="n2" type="matrix" values="0.06 0 0 0 0.0 0.06 0 0 0 0.0 0.06 0 0 0 0.0 0 0 0 0 1" result="n2a"/>
 <feComposite in="s4" in2="n2a" operator="arithmetic" k2="1" k3="1" k4="-0.03" result="sum0"/>
 <feColorMatrix in="sum0" type="matrix" values="1 0 0 0 0 1 0 0 0 0 1 0 0 0 0 0 0 0 0 1" result="sum"/>
 <feComponentTransfer in="sum">
  <feFuncR type="table" tableValues="0.000 0.000 0.000 0.000 0.000 0.000 0.000 0.000 0.000 0.000 0.000 0.000 0.000 0.000 0.000 0.000 0.000 0.000 0.000 0.000 0.012 0.110 0.209 0.307 0.406 0.504 0.602 0.701 0.799 0.898 0.996 1.000 1.000 1.000 1.000 1.000 1.000 1.000 1.000 1.000 1.000"/>
  <feFuncG type="table" tableValues="0.000 0.102 0.204 0.306 0.408 0.510 0.612 0.714 0.816 0.918 1.000 1.000 1.000 1.000 1.000 1.000 1.000 1.000 1.000 1.000 1.000 1.000 1.000 1.000 1.000 1.000 1.000 1.000 1.000 1.000 1.000 0.904 0.803 0.703 0.602 0.502 0.402 0.301 0.201 0.100 0.000"/>
  <feFuncB type="table" tableValues="0.941 0.947 0.953 0.959 0.965 0.971 0.977 0.983 0.989 0.995 0.980 0.881 0.782 0.683 0.583 0.484 0.385 0.286 0.187 0.087 0.000 0.000 0.000 0.000 0.000 0.000 0.000 0.000 0.000 0.000 0.000 0.000 0.000 0.000 0.000 0.000 0.000 0.000 0.000 0.000 0.000"/>
  <feFuncA type="identity"/>
 </feComponentTransfer>
</filter>
</defs>
<rect x="0" y="0" width="1476" height="474" fill="url(#prof)" filter="url(#wff)"/>
</svg>
<div class="a" style="left:3px;top:739px;width:1476px;height:474px;background:repeating-linear-gradient(180deg,rgba(0,200,255,0) 0px,rgba(0,200,255,0) 2px,rgba(0,192,255,0.3) 2px,rgba(0,192,255,0.3) 5px)"></div>
<div class="a" style="left:3px;top:1213px;width:1476px;height:5px;background:#000"></div>
<div class="a" id="cbar"></div>
<div class="cl" style="left:23px">-100</div>
<div class="cl" style="left:372px">-75.00</div>
<div class="cl" style="left:741px">-50.00</div>
<div class="cl" style="left:1110px">-25.00</div>
<div class="cl" style="left:1430px">0.00</div>

<!-- status bar -->
<div class="a" id="sbar"></div>
<div class="a" style="left:0;top:1244px;width:1482px;height:1px;background:#1c2228"></div>
<div class="a" style="left:0;top:1245px;width:1344px;height:35px;border:2px solid #4b5a68"></div>
<div class="a" style="left:190px;top:1245px;width:4px;height:35px;background:#4b5a68"></div>
<div class="t" style="left:66px;top:1252.5px;font-size:22px">信息</div>
<svg class="a" style="left:174px;top:1259px" width="12" height="8"><path d="M0,0 H11 L5.5,6 Z" fill="#fff"/></svg>
<div class="a" style="left:1418px;top:1253px;width:141px;height:20px;background:#c8c8c8"></div>
<div class="a" style="left:1419px;top:1254px;width:12px;height:18px;background:#000028"></div><div class="a" style="left:1433px;top:1254px;width:12px;height:18px;background:#2040b0"></div><div class="a" style="left:1447px;top:1254px;width:12px;height:18px;background:#2040b0"></div><div class="a" style="left:1461px;top:1254px;width:12px;height:18px;background:#2040b0"></div><div class="a" style="left:1475px;top:1254px;width:12px;height:18px;background:#000028"></div><div class="a" style="left:1489px;top:1254px;width:12px;height:18px;background:#000028"></div><div class="a" style="left:1503px;top:1254px;width:12px;height:18px;background:#000028"></div><div class="a" style="left:1517px;top:1254px;width:12px;height:18px;background:#000028"></div><div class="a" style="left:1531px;top:1254px;width:12px;height:18px;background:#000028"></div><div class="a" style="left:1545px;top:1254px;width:12px;height:18px;background:#000028"></div>
<div class="t" style="left:1604px;top:1253px;font-size:18px;font-weight:normal;line-height:20px;letter-spacing:-0.9px">52.59°C</div>
<div class="t" style="left:1766px;top:1253px;font-size:18px;font-weight:normal;line-height:20px;letter-spacing:-0.75px">2022/11/17 10:30:38</div>

<!-- right column -->
<div class="a" id="rcol"></div>
<div class="t" style="left:1556px;top:38px;font-size:24px">频率</div>
<div class="btn" style="left:1485px;top:102px;width:183px;height:100px;background:#008080">中心频率</div>
<div class="a" id="cpan"></div>
<div class="t" style="left:1747px;top:38px;font-size:24px">控制面板</div>
<div class="btn" style="left:1672px;top:102px;width:121px;height:100px;background:#1c7ad8">频率</div>
<div class="btn" style="left:1797px;top:102px;width:121px;height:100px">频宽</div>
<div class="btn" style="left:1672px;top:206px;width:121px;height:100px">电平<br>设置</div>
<div class="btn" style="left:1797px;top:206px;width:121px;height:100px">自动<br>设置</div>
<div class="btn" style="left:1672px;top:310px;width:121px;height:100px">带宽</div>
<div class="btn" style="left:1797px;top:310px;width:121px;height:100px">扫描</div>
<div class="btn" style="left:1672px;top:414px;width:121px;height:100px">轨迹</div>
<div class="btn" style="left:1797px;top:414px;width:121px;height:100px">触发</div>
<div class="btn" style="left:1672px;top:518px;width:121px;height:100px">测量</div>
<div class="btn" style="left:1797px;top:518px;width:121px;height:100px">测量<br>配置</div>
<div class="btn" style="left:1672px;top:622px;width:121px;height:100px">标记</div>
<div class="btn" style="left:1797px;top:622px;width:121px;height:100px">标记<br>搜索</div>
<div class="btn" style="left:1672px;top:726px;width:121px;height:100px;background:#808000">运行<br>单次</div>
<div class="btn" style="left:1797px;top:726px;width:121px;height:100px;background:#808000">运行<br>连续</div>
<div class="btn" style="left:1672px;top:830px;width:121px;height:100px">文件</div>
<div class="btn" style="left:1797px;top:830px;width:121px;height:100px">模式</div>
<div class="btn" style="left:1672px;top:934px;width:246px;height:100px">显示</div>
<div class="btn" style="left:1672px;top:1038px;width:246px;height:100px">设备</div>
<div class="btn" style="left:1672px;top:1142px;width:246px;height:100px">复位</div>
</body></html>
